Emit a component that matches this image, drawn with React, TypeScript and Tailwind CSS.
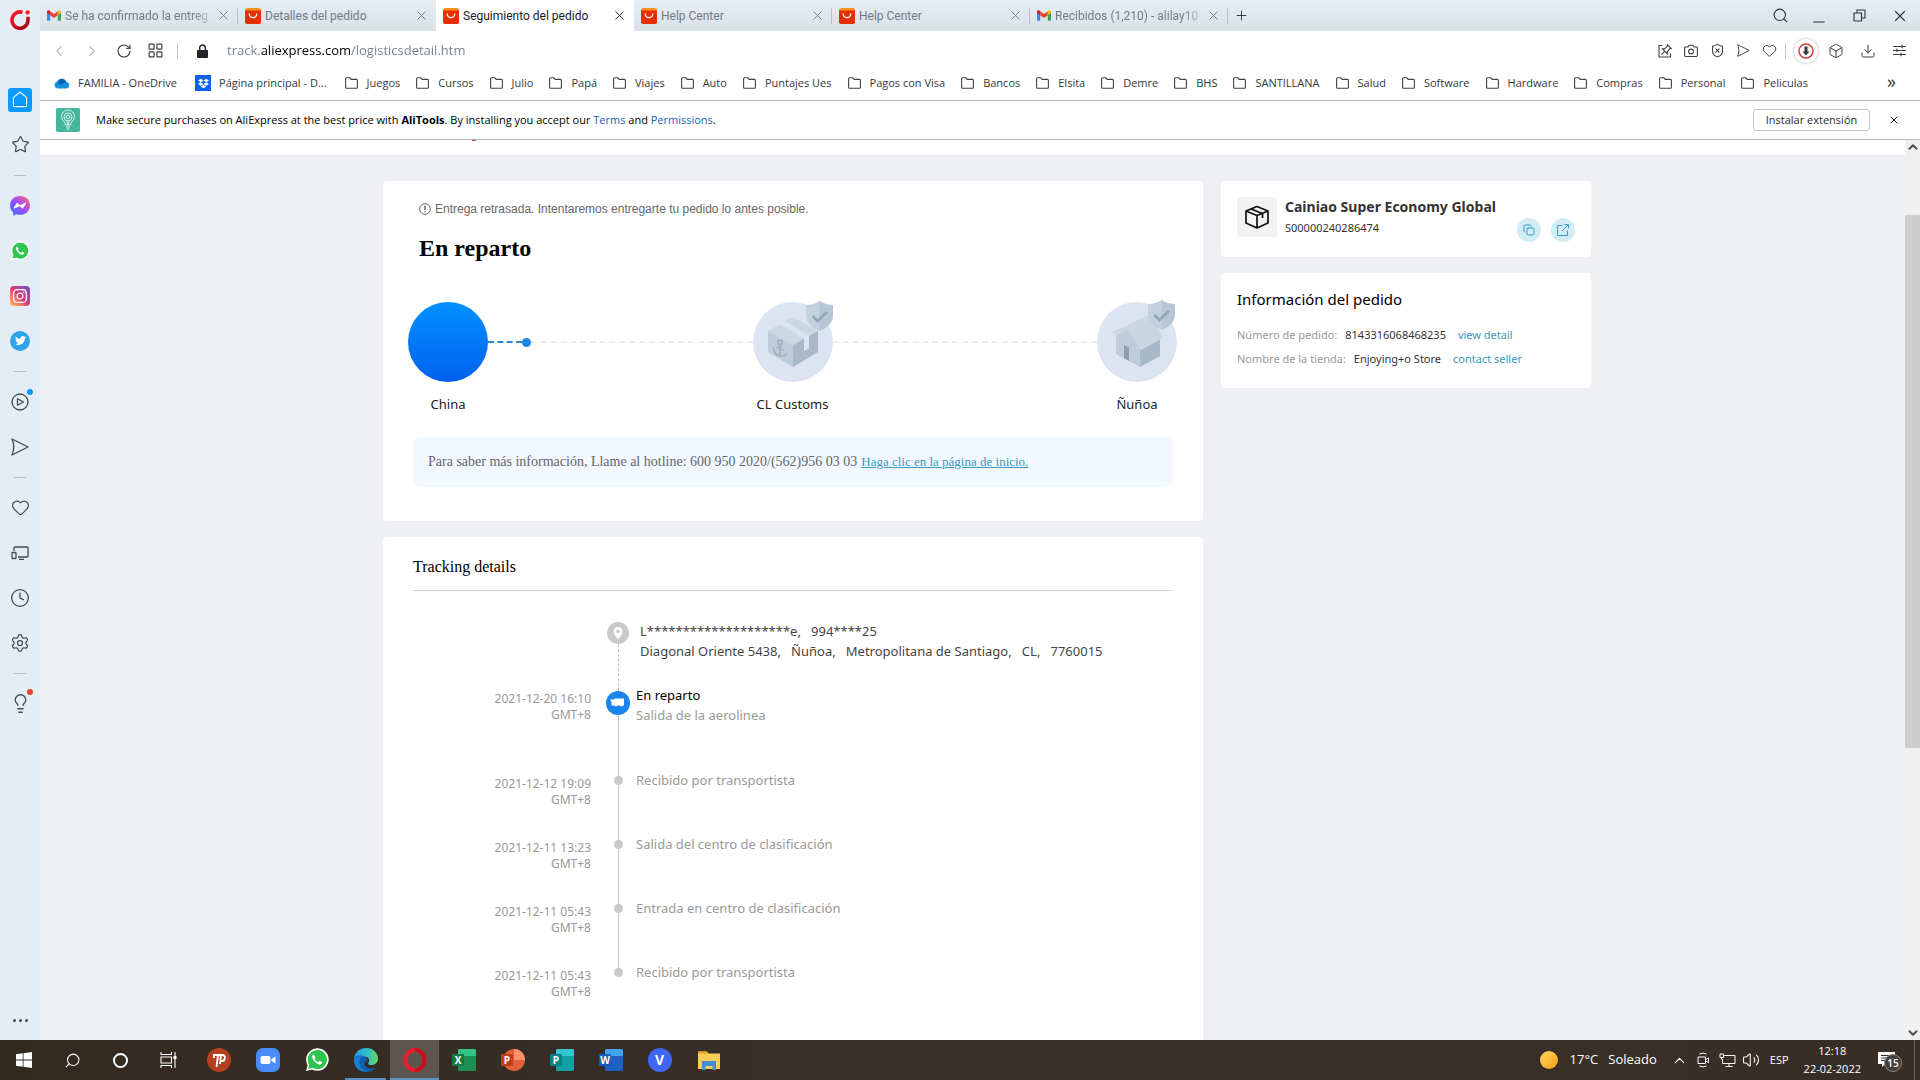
import type { ReactNode } from "react";
import {
  Box,
  ChevronLeft,
  ChevronRight,
  ChevronUp,
  ChevronDown,
  Clock,
  Copy,
  Download,
  Heart,
  LayoutGrid,
  Lightbulb,
  Minus,
  MonitorSmartphone,
  Plus,
  RotateCw,
  Search,
  Settings,
  ShieldX,
  Star,
  Volume2,
  X,
} from "lucide-react";
import { FaInstagram, FaTwitter, FaDropbox } from "react-icons/fa";

const tabs = [
  { icon: "gmail", title: "Se ha confirmado la entreg" },
  { icon: "ali", title: "Detalles del pedido" },
  { icon: "ali", title: "Seguimiento del pedido", active: true },
  { icon: "ali", title: "Help Center" },
  { icon: "ali", title: "Help Center" },
  { icon: "gmail", title: "Recibidos (1,210) - alilay10" },
];

const folders = [
  "Juegos", "Cursos", "Julio", "Papá", "Viajes", "Auto", "Puntajes Ues", "Pagos con Visa", "Bancos", "Elsita",
  "Demre", "BHS", "SANTILLANA", "Salud", "Software", "Hardware", "Compras", "Personal", "Peliculas",
];

const events = [
  { date: "2021-12-12 19:09", text: "Recibido por transportista" },
  { date: "2021-12-11 13:23", text: "Salida del centro de clasificación" },
  { date: "2021-12-11 05:43", text: "Entrada en centro de clasificación" },
  { date: "2021-12-11 05:43", text: "Recibido por transportista" },
];

function GmailIcon() {
  return (
    <svg viewBox="0 0 16 12" className="w-[14px] h-[11px] shrink-0">
      <path d="M0 1.500V11a1 1 0 0 0 1 1h2.700V5z" fill="#4285f4" />
      <path d="M16 1.500V11a1 1 0 0 1-1 1h-2.700V5z" fill="#34a853" />
      <path d="M12.300 1.200V5.600L16 2.800V1.600C16 .1 14.300-.6 13.100.5z" fill="#fbbc04" />
      <path d="M3.700 5.600V1.200L8 4.400l4.300-3.200v4.400L8 8.800z" fill="#ea4335" />
      <path d="M0 1.600v1.200l3.700 2.800V1.200L2.900.5C1.700-.6 0 .1 0 1.600z" fill="#c5221f" />
    </svg>
  );
}

function AliIcon() {
  return (
    <svg viewBox="0 0 16 16" className="w-4 h-4 shrink-0">
      <rect width="16" height="16" rx="2.500" fill="#f7931e" />
      <path d="M0 2.400h16V13.500a2.500 2.500 0 0 1-2.500 2.500h-11A2.500 2.500 0 0 1 0 13.500z" fill="#e62e04" />
      <path d="M4.300 6a3.700 3.700 0 0 0 7.400 0" fill="none" stroke="#fff" strokeWidth="1.300" strokeLinecap="round" />
    </svg>
  );
}

function WhatsappIcon({ className }: { className: string }) {
  return (
    <svg viewBox="0 0 24 24" className={className}>
      <path d="M1 23l1.600-5.800A11.300 11.300 0 1 1 7 21.500z" fill="#fff" />
      <path d="M3 21l1.300-4.200a9.600 9.600 0 1 1 3.100 3z" fill="#2cc64f" />
      <path d="M8.500 6.500c-1.500.8-1.700 2.600-.5 4.800 1.500 2.600 3.500 4.400 6 5.200 1.700.4 3-.6 3.200-2.300l-2.700-1.400-1.200 1.400c-1.900-.8-3-1.900-3.800-3.600l1-1.300z" fill="#fff" />
    </svg>
  );
}

function OperaTouchIcon() {
  return (
    <svg viewBox="0 0 20 20" className="w-5 h-5">
      <defs>
        <linearGradient id="gx" x1="0" y1="0" x2="1" y2="1">
          <stop offset="0" stopColor="#ff1b2d" />
          <stop offset="1" stopColor="#a70014" />
        </linearGradient>
      </defs>
      <path d="M12.500 2.300A8 8.200 0 1 0 18 10V6.800" fill="none" stroke="url(#gx)" strokeWidth="3.600" />
      <circle cx="17.600" cy="2.400" r="2.200" fill="#ff1b2d" />
    </svg>
  );
}

function FolderIcon() {
  return (
    <svg viewBox="0 0 13 12" className="w-[13px] h-3 shrink-0" fill="none" stroke="#3d4248" strokeWidth="1.100">
      <path d="M.6 10.200V1.800c0-.6.4-1 1-1h3.200l1.400 1.600h5.200c.6 0 1 .4 1 1v6.800c0 .6-.4 1-1 1H1.600c-.6 0-1-.4-1-1z" />
    </svg>
  );
}

function CloudIcon() {
  return (
    <svg viewBox="0 0 16 11" className="w-4 h-[11px] shrink-0">
      <path d="M4 10.500a3.600 3.600 0 0 1-.6-7.100A5 5 0 0 1 12.400 4 3.300 3.300 0 0 1 12.700 10.500z" fill="#1490df" />
      <path d="M3.400 3.400A5 5 0 0 1 12.400 4L6 7z" fill="#0364b8" />
    </svg>
  );
}

function PinPageIcon() {
  return (
    <svg viewBox="0 0 14 14" className="w-[14px] h-[14px]" fill="none" stroke="currentColor" strokeWidth="1.100">
      <path d="M4.500 1.500H1v11.500h11.500V9.500" />
      <path d="M9.500.8l3.700 3.700-1.500.3-2.200 2.600-.2 2.300-4.900-4.900 2.300-.2 2.500-2.200zM6.600 7.400L3.400 10.600" />
    </svg>
  );
}

function CameraIcon() {
  return (
    <svg viewBox="0 0 14 14" className="w-[14px] h-[14px]" fill="none" stroke="currentColor" strokeWidth="1.100">
      <path d="M1.500 3H4l1-1.800h4L10 3h2.500c.5 0 .9.400.9.900v7.700c0 .5-.4.900-.9.900h-11a.9.900 0 0 1-.9-.9V3.900c0-.5.4-.9.900-.9z" />
      <circle cx="7" cy="7.500" r="2.400" />
    </svg>
  );
}

function FlowIcon({ className }: { className: string }) {
  return (
    <svg viewBox="0 0 18 18" className={className} fill="none" stroke="currentColor" strokeWidth="1.300" strokeLinejoin="round">
      <path d="M1 1l16 8L1 17q3.500-8 0-16z" />
    </svg>
  );
}

function Shield() {
  return (
    <>
      <path d="M53 3q8 0 13.500-4Q72 3 80 3v11q0 9-13.500 15Q53 23 53 14z" fill="#c3d0de" />
      <path d="M66.500-1Q72 3 80 3v11q0 9-13.500 15z" fill="#b6c6d6" />
      <path d="M59.500 14l5 5 9.500-9" fill="none" stroke="#93a6b8" strokeWidth="2.600" />
    </>
  );
}

function CustomsIcon() {
  return (
    <svg viewBox="0 0 80 80" className="w-20 h-20 overflow-visible">
      <circle cx="40" cy="40" r="40" fill="#dbe4f0" />
      <path d="M15 29l25-14 25 14-25 14z" fill="#cbd7e3" />
      <path d="M15 29l25 14v22L15 50z" fill="#bfccd9" />
      <path d="M65 29L40 43v22l25-15z" fill="#a8b8c8" />
      <path d="M26 22l6-3 24 14.500v13l-5 2.500V36.500z" fill="#dbe4ef" />
      <g fill="none" stroke="#9eafc0" strokeWidth="1.700">
        <circle cx="27" cy="40.500" r="2.200" />
        <path d="M27 43v11M23.500 44.500l7 3.500M20.500 45.500c0 5 3.500 8 6.500 8.500s5.500-.5 7-2.500" />
      </g>
      <Shield />
    </svg>
  );
}

function HouseIcon() {
  return (
    <svg viewBox="0 0 80 80" className="w-20 h-20 overflow-visible">
      <circle cx="40" cy="40" r="40" fill="#dbe4f0" />
      <path d="M19 31l11-6 13 22v18L19 52z" fill="#bfccd9" />
      <path d="M43 47v18l20-11V36z" fill="#a8b8c8" />
      <path d="M15 30l14-6 24-12 13 24-22 12-13-20-12 5z" fill="#cad6e2" />
      <path d="M27 43l5 2.500V59l-5-3z" fill="#8d9fb1" />
      <g transform="translate(-2 -1)"><Shield /></g>
    </svg>
  );
}

function Sep() {
  return (
    <div className="h-4 flex items-center">
      <div className="w-3 h-px bg-[#b5bec8]" />
    </div>
  );
}

function SideButton({ label, children }: { label: string; children: ReactNode }) {
  return (
    <button aria-label={label} className="h-[45px] w-full flex items-center justify-center text-[#434a52]">
      <span className="relative">{children}</span>
    </button>
  );
}

function Sidebar() {
  return (
    <aside className="w-10 shrink-0 flex flex-col items-center bg-[#e4ecf4]">
      <button aria-label="Opera" className="h-10 w-full flex items-center justify-center">
        <OperaTouchIcon />
      </button>
      <div className="flex-1 flex flex-col items-center w-full pt-[37px]">
        <SideButton label="Inicio">
          <span className="w-6 h-6 rounded-[3px] bg-[#0a99ff] flex items-center justify-center">
            <svg viewBox="0 0 16 18" className="w-4 h-[17px]" fill="none" stroke="#fff" strokeWidth="1.200">
              <path d="M1 7.500Q1 7 1.500 6.500L8 1l6.500 5.500q.5.500.5 1V15q0 1.500-1.500 1.500h-11Q1 16.500 1 15z" />
            </svg>
          </span>
        </SideButton>
        <SideButton label="Marcadores"><Star size={19} strokeWidth={1.500} /></SideButton>
        <Sep />
        <SideButton label="Messenger">
          <svg viewBox="0 0 20 20" className="w-5 h-5">
            <defs>
              <linearGradient id="msg" x1="0" y1="1" x2="1" y2="0">
                <stop offset="0" stopColor="#2a7bff" />
                <stop offset=".5" stopColor="#a04bff" />
                <stop offset="1" stopColor="#ff6a6e" />
              </linearGradient>
            </defs>
            <path d="M10 0C4.300 0 0 4.100 0 9.500c0 2.900 1.200 5.300 3.200 7V20l3-1.700c1.200.4 2.500.5 3.800.5 5.700 0 10-4.100 10-9.400S15.700 0 10 0z" fill="url(#msg)" />
            <path d="M4 12.200L7.200 7.200l2.900 2.500L15.900 7l-3.300 5.200-2.900-2.400z" fill="#fff" stroke="#fff" strokeLinejoin="round" />
          </svg>
        </SideButton>
        <SideButton label="WhatsApp"><WhatsappIcon className="w-5 h-5" /></SideButton>
        <SideButton label="Instagram">
          <span className="w-5 h-5 rounded bg-gradient-to-tr from-[#fec14f] via-[#e0336f] to-[#6b3fd0] flex items-center justify-center text-white"><FaInstagram size={16} /></span>
        </SideButton>
        <SideButton label="Twitter">
          <span className="w-5 h-5 rounded-full bg-[#2fa3e8] flex items-center justify-center text-white"><FaTwitter size={11} /></span>
        </SideButton>
        <Sep />
        <SideButton label="Player">
          <svg viewBox="0 0 18 18" className="w-[18px] h-[18px]" fill="none" stroke="currentColor" strokeWidth="1.300">
            <circle cx="9" cy="9" r="8" />
            <path d="M6.500 5.800v6.400L12.500 9z" strokeLinejoin="round" />
          </svg>
          <span className="absolute -top-1 -right-1 w-1.5 h-1.5 rounded-full bg-[#0a99ff]" />
        </SideButton>
        <SideButton label="Flow"><FlowIcon className="w-[18px] h-[18px]" /></SideButton>
        <Sep />
        <SideButton label="Favoritos"><Heart size={19} strokeWidth={1.500} /></SideButton>
        <SideButton label="Dispositivos">
          <svg viewBox="0 0 18 14" className="w-[18px] h-[14px]" fill="none" stroke="currentColor" strokeWidth="1.300">
            <path d="M3 5V2q0-1 1-1h12q1 0 1 1v8q0 1-1 1H7M8 13.300h5" />
            <rect x="1" y="6.500" width="4" height="6" rx=".5" />
          </svg>
        </SideButton>
        <SideButton label="Historial"><Clock size={20} strokeWidth={1.500} /></SideButton>
        <SideButton label="Configuración"><Settings size={20} strokeWidth={1.500} /></SideButton>
        <Sep />
        <SideButton label="Sugerencias">
          <Lightbulb size={21} strokeWidth={1.500} />
          <span className="absolute -top-1 -right-0.5 w-1.5 h-1.5 rounded-full bg-[#f0412c]" />
        </SideButton>
      </div>
      <button aria-label="Más" className="h-10 w-full flex items-center justify-center gap-[3px]">
        <span className="w-[3px] h-[3px] rounded-full bg-[#434a52]" />
        <span className="w-[3px] h-[3px] rounded-full bg-[#434a52]" />
        <span className="w-[3px] h-[3px] rounded-full bg-[#434a52]" />
      </button>
    </aside>
  );
}

function TabBar() {
  return (
    <div className="h-[31px] shrink-0 flex items-center bg-gradient-to-b from-[#e6edf5] to-[#dae0e8] font-['Roboto',sans-serif] text-xs">
      {tabs.map((tab, i) => (
        <div
          key={i}
          className={
            tab.active
              ? "w-[198px] h-full flex items-center px-[7px] bg-white text-[#1c2024]"
              : "w-[198px] h-full flex items-center px-[7px] text-[#6f7b87]"
          }
        >
          {tab.icon === "gmail" ? <GmailIcon /> : <AliIcon />}
          <button
            className={
              tab.icon === "gmail"
                ? "ml-1 flex-1 min-w-0 text-left whitespace-nowrap [mask-image:linear-gradient(to_right,black_85%,transparent)]"
                : "ml-1 flex-1 min-w-0 text-left whitespace-nowrap"
            }
          >
            {tab.title}
          </button>
          <button aria-label="Cerrar pestaña"><X size={15} strokeWidth={1.500} /></button>
          {!tab.active && i !== 1 && <span className="w-px h-4 bg-[#b9c2cc] ml-1.5 -mr-[7px]" />}
        </div>
      ))}
      <button aria-label="Nueva pestaña" className="ml-1.5 text-[#2d333a]"><Plus size={15} strokeWidth={1.500} /></button>
      <div className="ml-auto flex items-center gap-[21px] pr-[11px] text-[#2d333a]">
        <button aria-label="Buscar"><Search size={17} strokeWidth={1.500} /></button>
        <button aria-label="Minimizar" className="pt-3"><Minus size={18} strokeWidth={1.500} /></button>
        <button aria-label="Restaurar">
          <svg viewBox="0 0 13 13" className="w-[13px] h-[13px] mx-1" fill="none" stroke="currentColor" strokeWidth="1.100">
            <path d="M1 4h7.500v8H1zM4 4V1h8v8H8.500" />
          </svg>
        </button>
        <button aria-label="Cerrar"><X size={18} strokeWidth={1.500} /></button>
      </div>
    </div>
  );
}

function AddressBar() {
  return (
    <div className="h-[39px] shrink-0 flex items-center pl-2.5 pr-[13px] text-[#3a4047]">
      <div className="flex items-center gap-[15px]">
        <button aria-label="Atrás" className="text-[#b4bac1]"><ChevronLeft size={18} strokeWidth={1.500} /></button>
        <button aria-label="Adelante" className="text-[#b4bac1]"><ChevronRight size={18} strokeWidth={1.500} /></button>
        <button aria-label="Recargar"><RotateCw size={16} strokeWidth={1.700} /></button>
        <button aria-label="Speed Dial"><LayoutGrid size={17} strokeWidth={1.700} /></button>
      </div>
      <span className="w-px h-4 ml-[13px] bg-[#c5cad0]" />
      <svg viewBox="0 0 11 14" className="w-[11px] h-[14px] ml-[19px]">
        <rect y="6" width="11" height="8" rx="1" fill="#22262a" />
        <path d="M2.700 6V3.800a2.800 2.800 0 0 1 5.600 0V6" fill="none" stroke="#22262a" strokeWidth="1.500" />
      </svg>
      <input
        aria-label="Dirección"
        defaultValue="track.aliexpress.com/logisticsdetail.htm"
        className="ml-[19px] mr-4 flex-1 min-w-0 outline-none font-['Open_Sans',sans-serif] text-[13px] text-transparent caret-black bg-clip-text bg-[linear-gradient(to_right,#76808b_34px,#000_34px,#000_124px,#76808b_124px)]"
      />
      <div className="flex items-center gap-3">
        <button aria-label="Fijar"><PinPageIcon /></button>
        <button aria-label="Captura"><CameraIcon /></button>
        <button aria-label="Bloqueador"><ShieldX size={15} strokeWidth={1.700} /></button>
        <button aria-label="Enviar"><FlowIcon className="w-[13px] h-[13px]" /></button>
        <button aria-label="Favorito"><Heart size={15} strokeWidth={1.600} /></button>
      </div>
      <span className="w-px h-4 ml-2 bg-[#c5cad0]" />
      <button aria-label="Extensión" className="ml-2 w-6 h-6 rounded-full bg-white shadow-[0_0_3px_rgba(0,0,0,0.35)] flex items-center justify-center">
        <svg viewBox="0 0 16 16" className="w-4 h-4">
          <circle cx="8" cy="8" r="7" fill="#fff" stroke="#cf3b3b" strokeWidth="1.500" />
          <path d="M6.500 3.500h3v5h2L8 12.500 4.500 8.500h2z" fill="#33383d" />
        </svg>
      </button>
      <div className="ml-2.5 flex items-center gap-4">
        <button aria-label="Extensiones"><Box size={16} strokeWidth={1.500} /></button>
        <button aria-label="Descargas"><Download size={16} strokeWidth={1.500} /></button>
        <button aria-label="Ajustes">
          <svg viewBox="0 0 13 13" className="w-[13px] h-[13px] mx-px" fill="none" stroke="currentColor" strokeWidth="1.200">
            <path d="M0 2.500h13M0 6.500h13M0 10.500h13M9 .7v3.600M4 4.700v3.600M8 8.700v3.600" />
          </svg>
        </button>
      </div>
    </div>
  );
}

function Bookmarks() {
  return (
    <nav className="h-[31px] shrink-0 flex items-center gap-4 pl-[14px] pr-6 pb-1 border-b border-[#b4bcc4] font-['Open_Sans',sans-serif] text-[11px] text-[#33383e] whitespace-nowrap">
      <a href="#" className="flex items-center gap-2 pr-0.5"><CloudIcon />FAMILIA - OneDrive</a>
      <a href="#" className="flex items-center gap-2 pr-0.5">
        <span className="w-4 h-4 bg-[#0d61f2] text-white flex items-center justify-center"><FaDropbox size={11} /></span>
        Página principal - D...
      </a>
      {folders.map((name) => (
        <a key={name} href="#" className="flex items-center gap-[9px]"><FolderIcon />{name}</a>
      ))}
      <button aria-label="Más marcadores" className="ml-auto pb-1 text-lg leading-4">»</button>
    </nav>
  );
}

function InstallBar() {
  return (
    <div className="h-[39px] shrink-0 flex items-center pl-4 pr-5 border-b border-[#b4bcc4] font-['Open_Sans',sans-serif] text-[11px] text-black">
      <svg viewBox="0 0 24 24" className="w-6 h-6 shrink-0">
        <rect width="24" height="24" rx="2" fill="#45b59c" />
        <g fill="none" stroke="#d3f3ea" strokeWidth="1">
          <path d="M9.500 17c0-3-4-4.500-4-8.500a6.500 6.500 0 0 1 13 0c0 4-4 5.500-4 8.500zM10 19h4M10.500 21h3" />
          <circle cx="12" cy="9" r="4" />
          <circle cx="12" cy="9" r="1.800" />
          <path d="M11 13l.5 4M13 13l-.5 4" />
        </g>
      </svg>
      <p className="ml-4 flex-1">
        Make secure purchases on AliExpress at the best price with <b>AliTools</b>. By installing you accept our{" "}
        <a href="#" className="text-[#1c62b9]">Terms</a> and <a href="#" className="text-[#1c62b9]">Permissions</a>.
      </p>
      <button className="h-[22px] w-[117px] rounded-[3px] border border-[#c4c8cc] text-[#2a2a2a]">Instalar extensión</button>
      <button aria-label="Cerrar aviso" className="ml-[18px]"><X size={12} strokeWidth={1.800} /></button>
    </div>
  );
}

function Progress() {
  return (
    <div className="mt-[38px] pl-[25px] pr-[26px]">
      <div className="flex items-center">
        <div className="w-20 h-20 rounded-full bg-gradient-to-b from-[#0090ff] to-[#0060ee]" />
        <div className="flex-1 flex items-center">
          <div className="w-[34px] border-t-2 border-dashed border-[#2a87d8]" />
          <div className="w-[9px] h-[9px] rounded-full bg-[#1a86e8]" />
          <div className="flex-1 border-t-2 border-dashed border-[#ebebeb]" />
        </div>
        <CustomsIcon />
        <div className="flex-1 border-t-2 border-dashed border-[#ebebeb]" />
        <HouseIcon />
      </div>
      <div className="mt-3 flex justify-between text-[13px] leading-5 text-[#222] text-center">
        <span className="w-20">China</span>
        <span className="w-20">CL Customs</span>
        <span className="w-20">Ñuñoa</span>
      </div>
    </div>
  );
}

function TrackingDetails() {
  return (
    <section className="flex-1 bg-white rounded-t px-[30px] pt-[18px]">
      <h2 className="pb-[11px] border-b border-[#d0d0d0] font-['Liberation_Serif',serif] text-base text-black">Tracking details</h2>
      <ol className="mt-[31px]">
        <li className="flex h-[69px]">
          <div className="w-[187px]" />
          <div className="w-9 flex flex-col items-center">
            <svg viewBox="0 0 22 22" className="w-[22px] h-[22px] shrink-0">
              <circle cx="11" cy="11" r="11" fill="#cacaca" />
              <path d="M11 17.500C8 13.800 6.500 11.700 6.500 9.600a4.500 4.500 0 0 1 9 0c0 2.100-1.500 4.200-4.500 7.900z" fill="#fff" />
              <circle cx="11" cy="9.500" r="1.800" fill="#cacaca" />
            </svg>
            <div className="flex-1 border-l border-dashed border-[#bdbdbd]" />
          </div>
          <p className="pl-1 -mt-px text-[13px] leading-5 text-[#444]">
            L********************e,&nbsp;&nbsp; 994****25<br />
            Diagonal Oriente 5438,&nbsp;&nbsp; Ñuñoa,&nbsp;&nbsp; Metropolitana de Santiago,&nbsp;&nbsp; CL,&nbsp;&nbsp; 7760015
          </p>
        </li>
        <li className="flex h-[85px]">
          <time className="w-[187px] pr-[9px] text-right text-xs text-[#999]">2021-12-20 16:10<br />GMT+8</time>
          <div className="w-9 flex flex-col items-center">
            <svg viewBox="0 0 24 24" className="w-6 h-6 shrink-0">
              <circle cx="12" cy="12" r="12" fill="#1a86ee" />
              <path d="M8.500 7.500H18v7h-1.200a1.400 1.400 0 0 1-2.600 0h-3a1.400 1.400 0 0 1-2.600 0H5.500v-3L4 8.500h4.500z" fill="#fff" />
            </svg>
            <div className="flex-1 w-px bg-[#c4c4c4]" />
          </div>
          <p className="-mt-1.5 text-[13px] leading-5 text-[#999]">
            <span className="text-black">En reparto</span><br />
            Salida de la aerolinea
          </p>
        </li>
        {events.map((e, i) => (
          <li key={i} className="flex h-16">
            <time className="w-[187px] pr-[9px] text-right text-xs text-[#999]">{e.date}<br />GMT+8</time>
            <div className="w-9 flex flex-col items-center">
              <div className="w-[9px] h-[9px] rounded-full bg-[#c9c9c9] shrink-0" />
              {i < events.length - 1 && <div className="flex-1 w-px bg-[#c4c4c4]" />}
            </div>
            <p className="-mt-1.5 text-[13px] leading-5 text-[#999]">{e.text}</p>
          </li>
        ))}
      </ol>
    </section>
  );
}

function Page() {
  return (
    <div className="flex-1 min-h-0 flex">
      <div className="flex-1 flex flex-col bg-[#eff0f4] font-['Noto_Sans',sans-serif] overflow-hidden">
        <div className="h-4 shrink-0 bg-white border-b border-[#e6e7ea] pl-[432px]">
          <div className="w-1 h-px bg-[#d0402a]" />
        </div>
        <main className="flex-1 min-h-0 flex gap-[18px] pl-[343px] pr-[314px] pt-[25px]">
          <div className="flex-[820] min-w-0 flex flex-col gap-4">
            <section className="bg-white rounded pt-[18px] pb-[34px]">
              <p className="pl-9 flex items-center gap-1 font-['Liberation_Sans',sans-serif] text-xs leading-5 text-[#666]">
                <svg viewBox="0 0 12 12" className="w-3 h-3" fill="none" stroke="#666">
                  <circle cx="6" cy="6" r="5.300" />
                  <path d="M6 2.800v4" strokeWidth="1.600" />
                  <path d="M6 7.800v1.400" strokeWidth="1.200" />
                </svg>
                Entrega retrasada. Intentaremos entregarte tu pedido lo antes posible.
              </p>
              <h1 className="mt-[13px] pl-9 font-['Liberation_Serif',serif] font-bold text-2xl text-black">En reparto</h1>
              <Progress />
              <p className="mt-[23px] mx-[30px] h-[50px] flex items-center gap-1 px-[15px] rounded-lg bg-[#f2f8ff] font-['Liberation_Serif',serif] text-sm text-[#666]">
                Para saber más información, Llame al hotline: 600 950 2020/(562)956 03 03
                <a href="#" className="text-[13px] text-[#3a97bd] underline">Haga clic en la página de inicio.</a>
              </p>
            </section>
            <TrackingDetails />
          </div>
          <aside className="flex-[370] min-w-0 flex flex-col gap-4">
            <section className="h-[76px] bg-white rounded flex px-4 pt-4 pb-[15px]">
              <div className="w-10 h-10 rounded-[3px] bg-[#f2f2f2] flex items-center justify-center">
                <svg viewBox="0 0 26 24" className="w-[26px] h-6" fill="none" stroke="#111" strokeWidth="1.700" strokeLinejoin="round">
                  <path d="M2 6l11-4.500L24 6v12l-11 5-11-5zM2 6l11 4.500L24 6M13 10.500V23M7 4l11.500 4.500v4.500" />
                </svg>
              </div>
              <div className="ml-2 flex-1 text-[#333]">
                <h3 className="text-sm leading-5 font-bold">Cainiao Super Economy Global</h3>
                <p className="mt-px text-[11px] leading-5">S00000240286474</p>
              </div>
              <div className="flex gap-2.5 items-end text-[#35a0c4]">
                <button aria-label="Copiar" className="w-6 h-6 rounded-full bg-[#d3ebf4] flex items-center justify-center"><Copy size={12} strokeWidth={2} /></button>
                <button aria-label="Abrir" className="w-6 h-6 rounded-full bg-[#d3ebf4] flex items-center justify-center">
                  <svg viewBox="0 0 12 12" className="w-3 h-3" fill="none" stroke="currentColor">
                    <path d="M5.500 1.500h-5v10h10v-5M7.500.5h4v4M11.500.5L5 7" />
                  </svg>
                </button>
              </div>
            </section>
            <section className="bg-white rounded px-4 pt-4 pb-[17px]">
              <h2 className="text-[15px] leading-5 text-black">Información del pedido</h2>
              <dl className="mt-[14px] text-[11px] leading-6">
                <div className="flex">
                  <dt className="text-[#999]">Número de pedido:</dt>
                  <dd className="ml-2 text-[#333]">8143316068468235</dd>
                  <dd className="ml-3"><a href="#" className="text-[#3a97bd]">view detail</a></dd>
                </div>
                <div className="flex">
                  <dt className="text-[#999]">Nombre de la tienda:</dt>
                  <dd className="ml-2 text-[#333]">Enjoying+o Store</dd>
                  <dd className="ml-3"><a href="#" className="text-[#3a97bd]">contact seller</a></dd>
                </div>
              </dl>
            </section>
          </aside>
        </main>
      </div>
      <div className="w-[15px] shrink-0 flex flex-col items-center bg-[#f0f0f0] text-[#505050]">
        <ChevronUp size={14} strokeWidth={3.500} />
        <div className="w-full flex-[61]" />
        <div className="w-full flex-[533] bg-[#cdcdcd]" />
        <div className="w-full flex-[278]" />
        <ChevronDown size={14} strokeWidth={3.500} />
      </div>
    </div>
  );
}

function OfficeIcon({ letter, dark, light, mid, round }: { letter: string; dark: string; light: string; mid: string; round?: boolean }) {
  return (
    <svg viewBox="0 0 24 24" className="w-6 h-6">
      {round ? (
        <>
          <circle cx="13" cy="12" r="11" fill={mid} />
          <path d="M13 1a11 11 0 0 1 11 11H13z" fill={light} />
        </>
      ) : (
        <>
          <rect x="6" y="1" width="18" height="22" rx="1.500" fill={mid} />
          <path d="M7.500 1h15A1.500 1.500 0 0 1 24 2.500V8H6V2.500A1.500 1.500 0 0 1 7.500 1z" fill={light} />
        </>
      )}
      <rect y="6" width="12" height="12" rx="1" fill={dark} />
      <text x="6" y="15.500" fontSize="10" fontWeight="bold" fontFamily="Open Sans, sans-serif" fill="#fff" textAnchor="middle">{letter}</text>
    </svg>
  );
}

const apps: { name: string; icon: ReactNode; state?: "open" | "active" }[] = [
  {
    name: "PicPick",
    icon: (
      <svg viewBox="0 0 24 24" className="w-6 h-6">
        <circle cx="12" cy="12" r="12" fill="#b5401f" />
        <path d="M7 10V7h8.500c3.500 0 3 6-.5 6h-2M11 7L9.500 19M14 7l-1 9" fill="none" stroke="#fff" strokeWidth="1.900" />
      </svg>
    ),
  },
  {
    name: "Zoom",
    icon: (
      <svg viewBox="0 0 24 24" className="w-6 h-6">
        <rect width="24" height="24" rx="7" fill="#4a8cf7" />
        <rect x="4.500" y="8" width="10" height="8" rx="2" fill="#fff" />
        <path d="M15.500 11l4-2.500v7l-4-2.500z" fill="#fff" />
      </svg>
    ),
  },
  { name: "WhatsApp", icon: <WhatsappIcon className="w-6 h-6" /> },
  {
    name: "Edge",
    state: "open",
    icon: (
      <svg viewBox="0 0 24 24" className="w-6 h-6">
        <defs>
          <linearGradient id="edge" x1="0" y1="0" x2="1" y2="0">
            <stop offset="0" stopColor="#1a9fe0" />
            <stop offset=".6" stopColor="#35c1c1" />
            <stop offset="1" stopColor="#63d957" />
          </linearGradient>
        </defs>
        <path d="M0 11C.5 4.500 5.500 0 12 0c7 0 12 5 12 10.500 0 4-3 6.500-6.500 6.500-3 0-4-1.200-3-2.600 2-3-.5-6-4.500-6C5 8.400 1 11 0 11z" fill="url(#edge)" />
        <path d="M0 12C0 9 4 6.500 9 8c3 1 5 3 4.500 5.500C9 12 9 19 16 20.500c2 .4 4 0 6-1.500-2 3.200-6 5-10 5C5 24 0 19 0 12z" fill="#1060b0" />
        <path d="M9 8c-3.500 2-4.500 6-3 9.500C7.500 21 10 23 13 24 5 24 0 19 0 12c1-3 5-4.500 9-4z" fill="#1480d0" />
      </svg>
    ),
  },
  {
    name: "Opera",
    state: "active",
    icon: (
      <svg viewBox="0 0 24 24" className="w-6 h-6">
        <ellipse cx="12" cy="12" rx="9.500" ry="10" fill="none" stroke="#ee1a28" strokeWidth="4" />
        <path d="M12 2c5.500 0 9.500 4.500 9.500 10S17.500 22 12 22" fill="none" stroke="#c3121e" strokeWidth="4" />
        <ellipse cx="12" cy="12" rx="5" ry="8.500" fill="#5c5550" />
      </svg>
    ),
  },
  { name: "Excel", icon: <OfficeIcon letter="X" dark="#107c41" mid="#1d8f50" light="#33c481" /> },
  { name: "PowerPoint", icon: <OfficeIcon letter="P" dark="#c43e1c" mid="#e0603e" light="#ff8f6b" round /> },
  { name: "Publisher", icon: <OfficeIcon letter="P" dark="#038387" mid="#119fa3" light="#37c6d0" /> },
  { name: "Word", icon: <OfficeIcon letter="W" dark="#185abd" mid="#1c60c0" light="#41a5ee" /> },
  {
    name: "V",
    icon: <span className="w-6 h-6 rounded-full bg-[#4066f5] text-white text-sm font-bold flex items-center justify-center">V</span>,
  },
  {
    name: "Explorador",
    icon: (
      <svg viewBox="0 0 24 22" className="w-6 h-[22px]">
        <path d="M1 2.500h9l1.500 2H23V20H1z" fill="#f8ce57" />
        <path d="M1 2.500h9l1.500 2H1z" fill="#dfa21e" />
        <path d="M5 12h14v9h-3.500v-4h-7v4H5z" fill="#3f8fd6" />
      </svg>
    ),
  },
];

function Taskbar() {
  return (
    <footer className="h-10 shrink-0 flex items-center bg-gradient-to-r from-[#33291f] via-[#38302a] to-[#382e25] text-white font-['Open_Sans',sans-serif]">
      <button aria-label="Inicio de Windows" className="w-12 h-10 flex items-center justify-center">
        <svg viewBox="0 0 16 16" className="w-4 h-4" fill="#fff">
          <path d="M0 2.300L6.700 1.300v6.300H0zM7.500 1.200L16 0v7.600H7.500zM0 8.400h6.700v6.300L0 13.700zM7.500 8.400H16V16l-8.500-1.200z" />
        </svg>
      </button>
      <button aria-label="Buscar en Windows" className="w-12 h-10 flex items-center justify-center"><Search size={17} strokeWidth={1.500} className="-scale-x-100" /></button>
      <button aria-label="Cortana" className="w-12 h-10 flex items-center justify-center">
        <span className="w-[15px] h-[15px] rounded-full border-2 border-white" />
      </button>
      <button aria-label="Vista de tareas" className="w-[50px] h-10 pr-0.5 flex items-center justify-center">
        <svg viewBox="0 0 17 16" className="w-[17px] h-4" fill="none" stroke="#fff" strokeWidth="1.100">
          <path d="M1 0v2.500h10.500V0M1 16v-2.500h10.500V16M1 5h10.500v6H1zM15 0v16" />
          <path d="M15 4v3" strokeWidth="3" />
        </svg>
      </button>
      {apps.map((app) => (
        <button
          key={app.name}
          aria-label={app.name}
          className={
            app.state === "active"
              ? "relative w-[49px] h-10 flex items-center justify-center bg-[#5c5550]"
              : "relative w-[49px] h-10 flex items-center justify-center"
          }
        >
          {app.icon}
          {app.state === "active" && <span className="absolute bottom-0 inset-x-0 h-0.5 bg-[#5d93c4]" />}
          {app.state === "open" && <span className="absolute bottom-0 inset-x-1 h-0.5 bg-[#5d93c4]" />}
        </button>
      ))}
      <div className="ml-auto flex items-center">
        <span className="w-[18px] h-[18px] rounded-full bg-gradient-to-br from-[#ffdb5a] to-[#ff9a0c]" />
        <span className="ml-3 text-[13px] whitespace-nowrap">17°C&nbsp;&nbsp; Soleado</span>
        <ChevronUp size={17} strokeWidth={1.500} className="ml-[14px]" />
        <svg viewBox="0 0 14 16" className="w-[14px] h-4 ml-[9px]" fill="none" stroke="#fff">
          <path d="M2.500 2Q6 .3 9.500 2M2.500 14Q6 15.700 9.500 14M1 5h7.500v6.500H1zM8.500 7.500L11.500 6v4.500L8.500 9" />
        </svg>
        <svg viewBox="0 0 17 15" className="w-[17px] h-[15px] ml-2" fill="none" stroke="#fff">
          <path d="M5 2.500h11v8H3.500V6M10 10.500v3M6.500 13.500h7M1 1h3.500v3.500H1zM2.700 4.500v2" />
        </svg>
        <Volume2 size={18} strokeWidth={1.400} className="ml-1.5" />
        <span className="ml-2.5 text-[11px]">ESP</span>
        <div className="ml-[15px] text-[11px] leading-[18px] text-center">12:18<br />22-02-2022</div>
        <button aria-label="Notificaciones" className="relative ml-[17px] w-6 h-6">
          <svg viewBox="0 0 17 16" className="w-[17px] h-4">
            <path d="M0 0h17v12H7l-3 3v-3H0z" fill="#fff" />
            <path d="M3 3.500h11M3 6h11M3 8.500h7" stroke="#33291f" />
          </svg>
          <span className="absolute left-1.5 top-1.5 w-[18px] h-[18px] rounded-full border border-[#8a8580] bg-[#453f3a] text-[10px] leading-4 font-semibold text-center">15</span>
        </button>
        <span className="ml-3 mr-[5px] w-px h-10 bg-[#6b645d]" />
      </div>
    </footer>
  );
}

export default function App() {
  return (
    <div className="h-screen flex flex-col overflow-hidden bg-white">
      <div className="flex-1 min-h-0 flex">
        <Sidebar />
        <div className="flex-1 min-w-0 flex flex-col">
          <TabBar />
          <AddressBar />
          <Bookmarks />
          <InstallBar />
          <Page />
        </div>
      </div>
      <Taskbar />
    </div>
  );
}
